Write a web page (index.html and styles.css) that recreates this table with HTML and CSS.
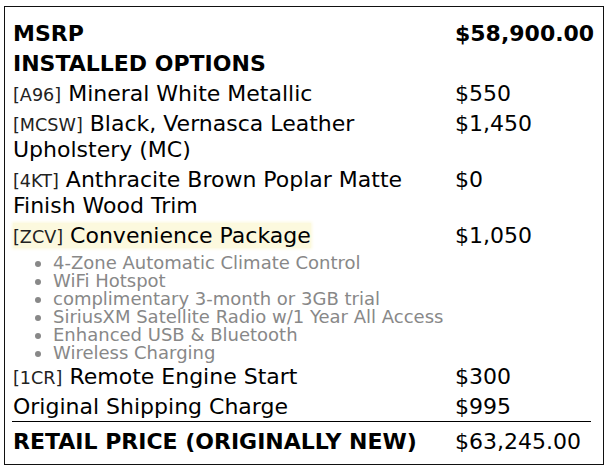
FILE: index.html
```html
<!DOCTYPE html>
<html lang="en-US">
<head>
    <meta charset="utf-8" />
    <title>Window Sticker</title>
    <link rel="stylesheet" href="styles.css">
</head>
<body>
<div class="sticker">
    <table class="prices">
        <colgroup>
            <col class="c-name">
            <col class="c-price">
        </colgroup>
        <tr class="strong">
            <td>MSRP</td>
            <td>$58,900.00</td>
        </tr>
        <tr class="strong">
            <td>INSTALLED OPTIONS</td>
            <td></td>
        </tr>
        <tr>
            <td><span class="code">[A96]</span> Mineral White Metallic</td>
            <td>$550</td>
        </tr>
        <tr>
            <td><span class="code">[MCSW]</span> Black, Vernasca Leather Upholstery (MC)</td>
            <td>$1,450</td>
        </tr>
        <tr>
            <td><span class="code">[4KT]</span> Anthracite Brown Poplar Matte Finish Wood Trim</td>
            <td>$0</td>
        </tr>
        <tr>
            <td><span class="mark"><span class="code">[ZCV]</span> Convenience Package</span></td>
            <td>$1,050</td>
        </tr>
        <tr class="features">
            <td colspan="2">
                <ul>
                    <li>4-Zone Automatic Climate Control</li>
                    <li>WiFi Hotspot</li>
                    <li>complimentary 3-month or 3GB trial</li>
                    <li>SiriusXM Satellite Radio w/1 Year All Access</li>
                    <li>Enhanced USB &amp; Bluetooth</li>
                    <li>Wireless Charging</li>
                </ul>
            </td>
        </tr>
        <tr>
            <td><span class="code">[1CR]</span> Remote Engine Start</td>
            <td>$300</td>
        </tr>
        <tr class="shipping">
            <td>Original Shipping Charge</td>
            <td>$995</td>
        </tr>
        <tr class="total">
            <td>RETAIL PRICE (ORIGINALLY NEW)</td>
            <td>$63,245.00</td>
        </tr>
    </table>
</div>
</body>
</html>
```

FILE: styles.css
```css
body {margin: 0; background-color: #fff; font-family: "DejaVu Sans", Verdana, sans-serif; color: #000;}
.sticker {box-sizing: border-box; width: 600px; height: 459px; margin: 6px 0 0 4px; padding: 12px 12px 0 7px; border: 1px solid #111;}
.prices {width: 100%; table-layout: fixed; border-collapse: collapse; font-size: 22px; line-height: 26px;}
.c-name {width: 442px;}
.prices td {padding: 2px 0 2px 1px; vertical-align: top;}
.strong td {font-weight: bold;}
.code {font-size: 0.8em; line-height: 1; color: #222;}
.mark {background-color: #fcf9de; box-shadow: 0 0 3px 1px #fcf9de;}
.features td {padding: 0;}
.features ul {margin: 3px 0 1px 0; padding-left: 41px; font-size: 18px; line-height: 17.9px; color: #888;}
.shipping td {padding-bottom: 1px;}
.total td {border-top: 1px solid #000; padding-top: 7px;}
.total td:first-child {font-weight: bold;}
```
